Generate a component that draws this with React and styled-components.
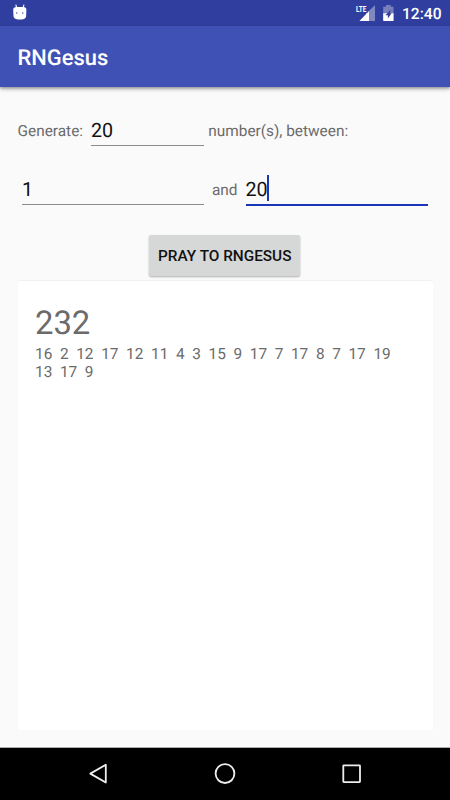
import React from "react";
import styled, { createGlobalStyle } from "styled-components";

const GlobalStyle = createGlobalStyle`
  * { box-sizing: border-box; }
  body { margin: 0; background: #fafafa; }
`;

const Screen = styled.div`
  width: 450px;
  height: 800px;
  display: flex;
  flex-direction: column;
  overflow: hidden;
  background: #fafafa;
  color: #6b6b6b;
  font: 15.4px/18px Roboto, sans-serif;
  text-rendering: geometricPrecision;
`;

const StatusBar = styled.header`
  height: 26px;
  flex: none;
  display: flex;
  align-items: flex-start;
  justify-content: space-between;
  padding: 0 9px 0 12px;
  background: #303f9f;
  color: #fff;
`;

const StatusIcons = styled.div`
  display: flex;
  height: 26px;
`;

const Clock = styled.time`
  width: 39px;
  font-size: 15.6px;
  font-weight: 500;
  line-height: 28px;
  white-space: nowrap;
`;

const AppBar = styled.div`
  height: 61px;
  flex: none;
  padding-left: 17.5px;
  background: #3f51b5;
  box-shadow: 0 2px 4px rgba(0, 0, 0, 0.32), 0 1px 2px rgba(0, 0, 0, 0.16);
`;

const Title = styled.h1`
  margin: 0;
  color: #fff;
  font-size: 21.9px;
  font-weight: 500;
  line-height: 66px;
`;

const Content = styled.main`
  flex: 1;
  min-height: 0;
  display: flex;
  flex-direction: column;
  padding: 30px 17px 17.5px 17.5px;
`;

const Row = styled.div`
  height: 30px;
  flex: none;
  display: flex;
  align-items: flex-start;
  margin-bottom: ${(p) => p.$gap}px;
  padding-left: ${(p) => p.$indent || 0}px;
`;

const Label = styled.span`
  width: ${(p) => p.$width}px;
  padding-left: ${(p) => p.$indent || 0}px;
  flex: none;
  line-height: 29px;
  white-space: nowrap;
`;

const Field = styled.div`
  width: ${(p) => p.$width}px;
  height: ${(p) => (p.$focused ? 30 : 29)}px;
  flex: none;
  display: flex;
  border-bottom: ${(p) => (p.$focused ? "2px solid #1a35b5" : "1px solid #8c8c8c")};
  color: #111;
  font-size: 19.7px;
  line-height: 27px;
`;

const Caret = styled.span`
  width: 2px;
  height: 26px;
  margin: -1px 0 0 -1px;
  background: #1a35b5;
`;

const PrayButton = styled.button`
  width: 151px;
  height: 41px;
  flex: none;
  align-self: center;
  margin: 0 1px 5px 0;
  padding: 1px 0 0;
  border: 0;
  border-radius: 2px;
  background: #d6d7d7;
  color: #111;
  font: 500 15.35px/18px Roboto, sans-serif;
  white-space: nowrap;
  box-shadow: 0 1px 2px rgba(0, 0, 0, 0.3);
`;

const Card = styled.section`
  flex: 1;
  padding: 23px 17.5px 0;
  border-radius: 2px;
  background: #fff;
  box-shadow: 0 -1px 1px rgba(0, 0, 0, 0.035);
`;

const Total = styled.div`
  font-size: 32.8px;
  line-height: 40px;
`;

const Results = styled.div`
  margin-top: 1px;
  white-space: pre-wrap;
`;

const NavBar = styled.nav`
  height: 53px;
  flex: none;
  border-top: 1px solid #a9afab;
  background: #000;
  line-height: 0;
`;

const NotificationIcon = () => (
  <svg width="16" height="26" viewBox="0 0 16 26" fill="#fff">
    <path d="M1.2 9.2Q1.4 7.6 3 7.2L4.6 6.9H11.1L12.8 7.2Q14.2 7.6 14.4 9.2L14.1 16.5Q13.9 18.4 12 18.9Q8 20 3.8 18.9Q1.8 18.4 1.5 16.5Z" />
    <path d="M4.7 8L3.8 4.6M11 8L12 4.6" stroke="#fff" strokeWidth="1.1" />
    <circle cx="4.8" cy="13" r=".65" fill="#303f9f" />
    <circle cx="10.8" cy="13" r=".65" fill="#303f9f" />
  </svg>
);

const SignalText = styled.text`
  font: 700 8.5px Roboto, sans-serif;
`;

const SignalIcon = () => (
  <svg width="24" height="26" viewBox="0 0 24 26" fill="#fff">
    <path d="M20 5.2V21H4.5L11 14.5V13H14V10.8Z" fill="#7f88c1" />
    <path d="M14 11V21H4.5Z" />
    <SignalText x="1" y="12" textLength="10.3" lengthAdjust="spacingAndGlyphs">LTE</SignalText>
  </svg>
);

const BatteryIcon = () => (
  <svg width="23" height="26" viewBox="0 0 23 26">
    <path d="M4.2 6.7H7V5H11.8V6.7H14.5V21H4.2Z" fill="#7780bd" />
    <path d="M4.2 13.2H14.5V20.2Q14.5 21 13.7 21H5Q4.2 21 4.2 20.2Z" fill="#fff" />
    <path d="M11.8 9.5L6.4 15.2H8.9V18.6L12.6 13.2H10.8Z" fill="#303f9f" />
  </svg>
);

const NavIcons = () => (
  <svg width="450" height="52" viewBox="0 748 450 52" fill="none" stroke="#eee" strokeWidth="1.8">
    <path d="M105.8 764.7V782.5L90.3 773.6Z" strokeLinejoin="round" />
    <circle cx="225" cy="773.6" r="9.4" />
    <rect x="343.3" y="765.4" width="16.7" height="16.7" rx=".5" />
  </svg>
);

export default function App() {
  return (
    <>
      <GlobalStyle />
      <Screen>
        <StatusBar>
          <NotificationIcon />
          <StatusIcons>
            <SignalIcon />
            <BatteryIcon />
            <Clock>12:40</Clock>
          </StatusIcons>
        </StatusBar>
        <AppBar>
          <Title>RNGesus</Title>
        </AppBar>
        <Content>
          <Row $gap={29}>
            <Label $width={73.5}>Generate:</Label>
            <Field $width={113}>20</Field>
            <Label $width={150} $indent={4.3}>number(s), between:</Label>
          </Row>
          <Row $gap={29} $indent={4.5}>
            <Field $width={182}>1</Field>
            <Label $width={41.5} $indent={8}>and</Label>
            <Field $width={182.5} $focused>
              20
              <Caret />
            </Field>
          </Row>
          <PrayButton>PRAY TO RNGESUS</PrayButton>
          <Card>
            <Total>232</Total>
            <Results>
              {"16  2  12  17  12  11  4  3  15  9  17  7  17  8  7  17  19\n13  17  9"}
            </Results>
          </Card>
        </Content>
        <NavBar>
          <NavIcons />
        </NavBar>
      </Screen>
    </>
  );
}
